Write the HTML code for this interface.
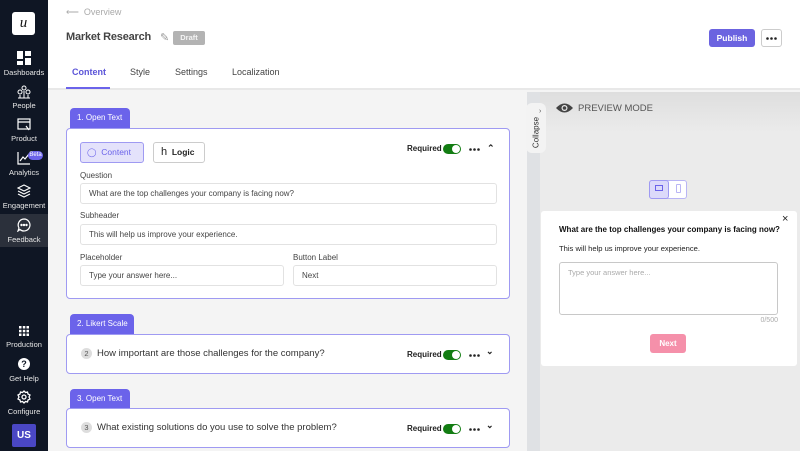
<!DOCTYPE html>
<html><head><meta charset="utf-8"><style>
*{box-sizing:border-box;margin:0;padding:0}
body{width:800px;height:451px;overflow:hidden;font-family:"Liberation Sans",sans-serif;background:#f4f4f4;position:relative;color:#333}
.abs{position:absolute}
#side{left:0;top:0;width:48px;height:451px;background:#0f1624;color:#fff}
.nl{position:absolute;width:48px;text-align:center;font-size:7.5px;color:#e6e6e6}
.ic{position:absolute;left:17px;width:14px;height:14px}
#top{left:48px;top:0;width:752px;height:90px;background:#fff;border-bottom:2px solid #e8e8e8}
.tab{position:absolute;top:67px;font-size:9px;color:#444}
.card{position:absolute;left:66px;width:444px;background:#fff;border:1.5px solid #9f9af2;border-radius:4px}
.ctab{position:absolute;left:70px;height:20px;background:#6b63ea;color:#fff;font-size:8px;line-height:20px;padding-left:7px;border-radius:4px 4px 0 0}
.lbl{position:absolute;font-size:8px;color:#444}
.inp{position:absolute;height:21px;border:1px solid #e2e2e2;border-radius:3px;font-size:8px;color:#444;line-height:19px;padding-left:8px;background:#fff}
.req{position:absolute;font-size:8px;color:#222;font-weight:bold}
.tog{position:absolute;width:18px;height:10px;background:#137d13;border-radius:5px}
.tog:after{content:"";position:absolute;right:1px;top:1px;width:8px;height:8px;border-radius:50%;background:#fff}
.dots{position:absolute;width:11px;height:3px}
.car{position:absolute;font-size:9px;color:#222;font-weight:bold}
.num{display:inline-block;width:11px;height:11px;border-radius:50%;background:#ddd;font-size:7.5px;text-align:center;line-height:11px;margin-right:5px;color:#555}
.qt{position:absolute;left:14px;top:13px;font-size:9.5px;color:#333}
</style></head><body>
<div id="side" class="abs">
 <div class="abs" style="left:12px;top:12px;width:23px;height:23px;background:#fff;border-radius:3px;color:#111;font-family:'Liberation Serif',serif;font-style:italic;font-size:15px;text-align:center;line-height:22px">u</div>
 <svg class="ic" style="top:51px" viewBox="0 0 14 14"><rect x="0" y="0" width="6" height="8" fill="#fff"/><rect x="8" y="0" width="6" height="5" fill="#fff"/><rect x="0" y="10" width="6" height="4" fill="#fff"/><rect x="8" y="7" width="6" height="7" fill="#fff"/></svg>
 <div class="nl" style="top:68px">Dashboards</div>
 <svg class="ic" style="top:85px" viewBox="0 0 14 14" fill="none" stroke="#fff" stroke-width="1"><circle cx="7" cy="3" r="2"/><circle cx="3" cy="7" r="2"/><circle cx="11" cy="7" r="2"/><path d="M1 13h12M3 10v3M7 6v7M11 10v3"/></svg>
 <div class="nl" style="top:101px">People</div>
 <svg class="ic" style="top:118px" viewBox="0 0 14 14" fill="none" stroke="#fff" stroke-width="1.2"><rect x="1" y="1" width="12" height="10"/><path d="M1 4h12M9 8l3 4"/></svg>
 <div class="nl" style="top:134px">Product</div>
 <svg class="ic" style="top:151px" viewBox="0 0 14 14" fill="none" stroke="#fff" stroke-width="1.2"><path d="M1 1v12h12M3 10l3-4 2 2 4-5"/></svg>
 <div class="abs" style="left:28px;top:151px;width:15px;height:9px;background:#6b63ea;border-radius:5px;font-size:6px;text-align:center;line-height:9px">Beta</div>
 <div class="nl" style="top:168px">Analytics</div>
 <svg class="ic" style="top:184px" viewBox="0 0 14 14" fill="none" stroke="#fff" stroke-width="1.1"><path d="M7 1l6 3-6 3-6-3zM1 7l6 3 6-3M1 10l6 3 6-3"/></svg>
 <div class="nl" style="top:201px">Engagement</div>
 <div class="abs" style="left:0;top:214px;width:48px;height:33px;background:#2b303b"></div>
 <svg class="ic" style="top:218px" viewBox="0 0 14 14" fill="none" stroke="#fff" stroke-width="1.2"><path d="M7 1a6 6 0 1 1-4 10.5L1 13l1-3A6 6 0 0 1 7 1z"/><circle cx="4.5" cy="7" r=".6" fill="#fff"/><circle cx="7" cy="7" r=".6" fill="#fff"/><circle cx="9.5" cy="7" r=".6" fill="#fff"/></svg>
 <div class="nl" style="top:235px">Feedback</div>
 <svg class="ic" style="top:324px" viewBox="0 0 14 14" fill="#fff"><rect x="2" y="2" width="2.5" height="2.5"/><rect x="5.8" y="2" width="2.5" height="2.5"/><rect x="9.5" y="2" width="2.5" height="2.5"/><rect x="2" y="5.8" width="2.5" height="2.5"/><rect x="5.8" y="5.8" width="2.5" height="2.5"/><rect x="9.5" y="5.8" width="2.5" height="2.5"/><rect x="2" y="9.5" width="2.5" height="2.5"/><rect x="5.8" y="9.5" width="2.5" height="2.5"/><rect x="9.5" y="9.5" width="2.5" height="2.5"/></svg>
 <div class="nl" style="top:340px">Production</div>
 <div class="abs" style="left:18px;top:358px;width:12px;height:12px;border-radius:50%;background:#fff;color:#0f1624;font-size:9px;font-weight:bold;text-align:center;line-height:12px">?</div>
 <div class="nl" style="top:374px">Get Help</div>
 <svg class="ic" style="top:390px" viewBox="0 0 14 14" fill="none" stroke="#fff" stroke-width="1.3"><circle cx="7" cy="7" r="2"/><path d="M7 1l1.5 1.5 2-.5.5 2 2 1-1 2 1 2-2 1-.5 2-2-.5L7 13l-1.5-1.5-2 .5-.5-2-2-1 1-2-1-2 2-1 .5-2 2 .5z"/></svg>
 <div class="nl" style="top:407px">Configure</div>
 <div class="abs" style="left:12px;top:424px;width:24px;height:23px;background:#4a47c4;border-radius:2px;font-size:10px;font-weight:bold;text-align:center;line-height:23px">US</div>
</div>
<div id="top" class="abs">
 <div class="abs" style="left:18px;top:7px;font-size:9px;color:#aaa">⟵ &nbsp;Overview</div>
 <div class="abs" style="left:18px;top:31px;font-size:11px;letter-spacing:-0.2px;font-weight:bold;color:#444">Market Research</div>
 <div class="abs" style="left:112px;top:31px;font-size:11px;color:#999">✎</div>
 <div class="abs" style="left:125px;top:31px;width:32px;height:14px;background:#b3b3b3;border-radius:2px;color:#f4f4f4;font-size:7.5px;font-weight:bold;text-align:center;line-height:14px">Draft</div>
 <div class="tab" style="left:24px;color:#5b54d8;font-weight:bold">Content</div>
 <div class="tab" style="left:82px">Style</div>
 <div class="tab" style="left:127px">Settings</div>
 <div class="tab" style="left:184px">Localization</div>
 <div class="abs" style="left:18px;top:87px;width:44px;height:2px;background:#6b63ea"></div>
 <div class="abs" style="left:661px;top:29px;width:46px;height:18px;background:#6b63e0;border-radius:3px;color:#fff;font-size:8.5px;font-weight:bold;text-align:center;line-height:18px">Publish</div>
 <div class="abs" style="left:713px;top:29px;width:21px;height:18px;border:1px solid #ccc;border-radius:3px"></div>
 <svg class="dots" style="left:718px;top:37px" viewBox="0 0 11 3"><circle cx="1.5" cy="1.5" r="1.3" fill="#222"/><circle cx="5.5" cy="1.5" r="1.3" fill="#222"/><circle cx="9.5" cy="1.5" r="1.3" fill="#222"/></svg>
</div>

<div class="ctab" style="top:108px;width:60px">1. Open Text</div>
<div class="card" style="top:128px;height:171px">
 <div class="abs" style="left:13px;top:13px;width:64px;height:21px;background:#e4e2fb;border:1px solid #9f9af2;border-radius:3px;font-size:8.5px;color:#6b63ea;line-height:19px;padding-left:6px">◯&nbsp; Content</div>
 <div class="abs" style="left:86px;top:13px;width:52px;height:21px;border:1px solid #ccc;border-radius:3px;font-size:8.5px;color:#222;font-weight:bold;line-height:19px;padding-left:7px"><span style="font-weight:normal;font-size:11px">h</span>&nbsp; Logic</div>
 <div class="req" style="left:340px;top:15px">Required</div>
 <div class="tog" style="left:376px;top:15px"></div>
 <svg class="dots" style="left:402px;top:19px" viewBox="0 0 11 3"><circle cx="1.5" cy="1.5" r="1.3" fill="#222"/><circle cx="5.5" cy="1.5" r="1.3" fill="#222"/><circle cx="9.5" cy="1.5" r="1.3" fill="#222"/></svg>
 <div class="car" style="left:420px;top:14px">⌃</div>
 <div class="lbl" style="left:13px;top:42px">Question</div>
 <div class="inp" style="left:13px;top:54px;width:417px">What are the top challenges your company is facing now?</div>
 <div class="lbl" style="left:13px;top:82px">Subheader</div>
 <div class="inp" style="left:13px;top:95px;width:417px">This will help us improve your experience.</div>
 <div class="lbl" style="left:13px;top:124px">Placeholder</div>
 <div class="inp" style="left:13px;top:136px;width:204px">Type your answer here...</div>
 <div class="lbl" style="left:226px;top:124px">Button Label</div>
 <div class="inp" style="left:226px;top:136px;width:204px">Next</div>
</div>

<div class="ctab" style="top:314px;width:64px">2. Likert Scale</div>
<div class="card" style="top:334px;height:40px">
 <div class="qt"><span class="num">2</span>How important are those challenges for the company?</div>
 <div class="req" style="left:340px;top:15px">Required</div><div class="tog" style="left:376px;top:15px"></div>
 <svg class="dots" style="left:402px;top:19px" viewBox="0 0 11 3"><circle cx="1.5" cy="1.5" r="1.3" fill="#222"/><circle cx="5.5" cy="1.5" r="1.3" fill="#222"/><circle cx="9.5" cy="1.5" r="1.3" fill="#222"/></svg>
 <div class="car" style="left:419px;top:11px">⌄</div>
</div>
<div class="ctab" style="top:389px;width:60px">3. Open Text</div>
<div class="card" style="top:408px;height:40px">
 <div class="qt"><span class="num">3</span>What existing solutions do you use to solve the problem?</div>
 <div class="req" style="left:340px;top:15px">Required</div><div class="tog" style="left:376px;top:15px"></div>
 <svg class="dots" style="left:402px;top:19px" viewBox="0 0 11 3"><circle cx="1.5" cy="1.5" r="1.3" fill="#222"/><circle cx="5.5" cy="1.5" r="1.3" fill="#222"/><circle cx="9.5" cy="1.5" r="1.3" fill="#222"/></svg>
 <div class="car" style="left:419px;top:11px">⌄</div>
</div>

<div class="abs" style="left:520px;top:92px;width:8px;height:359px;background:#f4f4f4"></div>
<div class="abs" style="left:527px;top:92px;width:13px;height:359px;background:#dfe1e4"></div>
<div class="abs" style="left:540px;top:92px;width:260px;height:359px;background:#ebebeb"></div>
<div class="abs" style="left:540px;top:92px;width:260px;height:40px;background:linear-gradient(#dedede,#ebebeb)"></div>
<div class="abs" style="left:526px;top:103px;width:20px;height:50px;background:#f3f3f3;border-radius:6px"></div>
<div class="abs" style="font-size:8px;color:#333;transform:rotate(-90deg);width:40px;text-align:center;top:128px;left:516px">Collapse</div>
<div class="abs" style="left:539px;top:108px;font-size:7px;color:#555">›</div>
<svg class="abs" style="left:555px;top:102px" width="19" height="12" viewBox="0 0 19 12"><path d="M1 6Q9.5-3 18 6Q9.5 15 1 6z" fill="#444"/><circle cx="9.5" cy="6" r="3" fill="#ebebeb"/><circle cx="9.5" cy="6" r="1.8" fill="#444"/></svg>
<div class="abs" style="left:578px;top:103px;font-size:9.5px;color:#555">PREVIEW MODE</div>
<div class="abs" style="left:649px;top:180px;width:38px;height:19px;border:1px solid #b9b5f5;border-radius:3px;background:#fff"></div>
<div class="abs" style="left:649px;top:180px;width:20px;height:19px;border:1px solid #9f9af2;border-radius:3px;background:#dcdafa"></div>
<div class="abs" style="left:655px;top:185px;width:8px;height:6px;border:1px solid #6b63ea"></div>
<div class="abs" style="left:676px;top:184px;width:5px;height:9px;border:1px solid #b9b5f5;border-radius:1px"></div>
<div class="abs" style="left:541px;top:211px;width:256px;height:155px;background:#fff;border-radius:3px"></div>
<div class="abs" style="left:782px;top:213px;font-size:11px;color:#222">×</div>
<div class="abs" style="left:559px;top:225px;font-size:8px;font-weight:bold;color:#111">What are the top challenges your company is facing now?</div>
<div class="abs" style="left:559px;top:244px;font-size:7.6px;color:#222">This will help us improve your experience.</div>
<div class="abs" style="left:559px;top:262px;width:219px;height:53px;border:1px solid #c8c8c8;border-radius:3px;font-size:7.5px;color:#aaa;padding:5px 8px">Type your answer here...</div>
<div class="abs" style="left:740px;top:317px;width:38px;text-align:right;font-size:7px;color:#aaa">0/500</div>
<div class="abs" style="left:650px;top:334px;width:36px;height:19px;background:#f590aa;border-radius:3px;color:#fff;font-size:8px;font-weight:bold;text-align:center;line-height:19px">Next</div>
</body></html>
